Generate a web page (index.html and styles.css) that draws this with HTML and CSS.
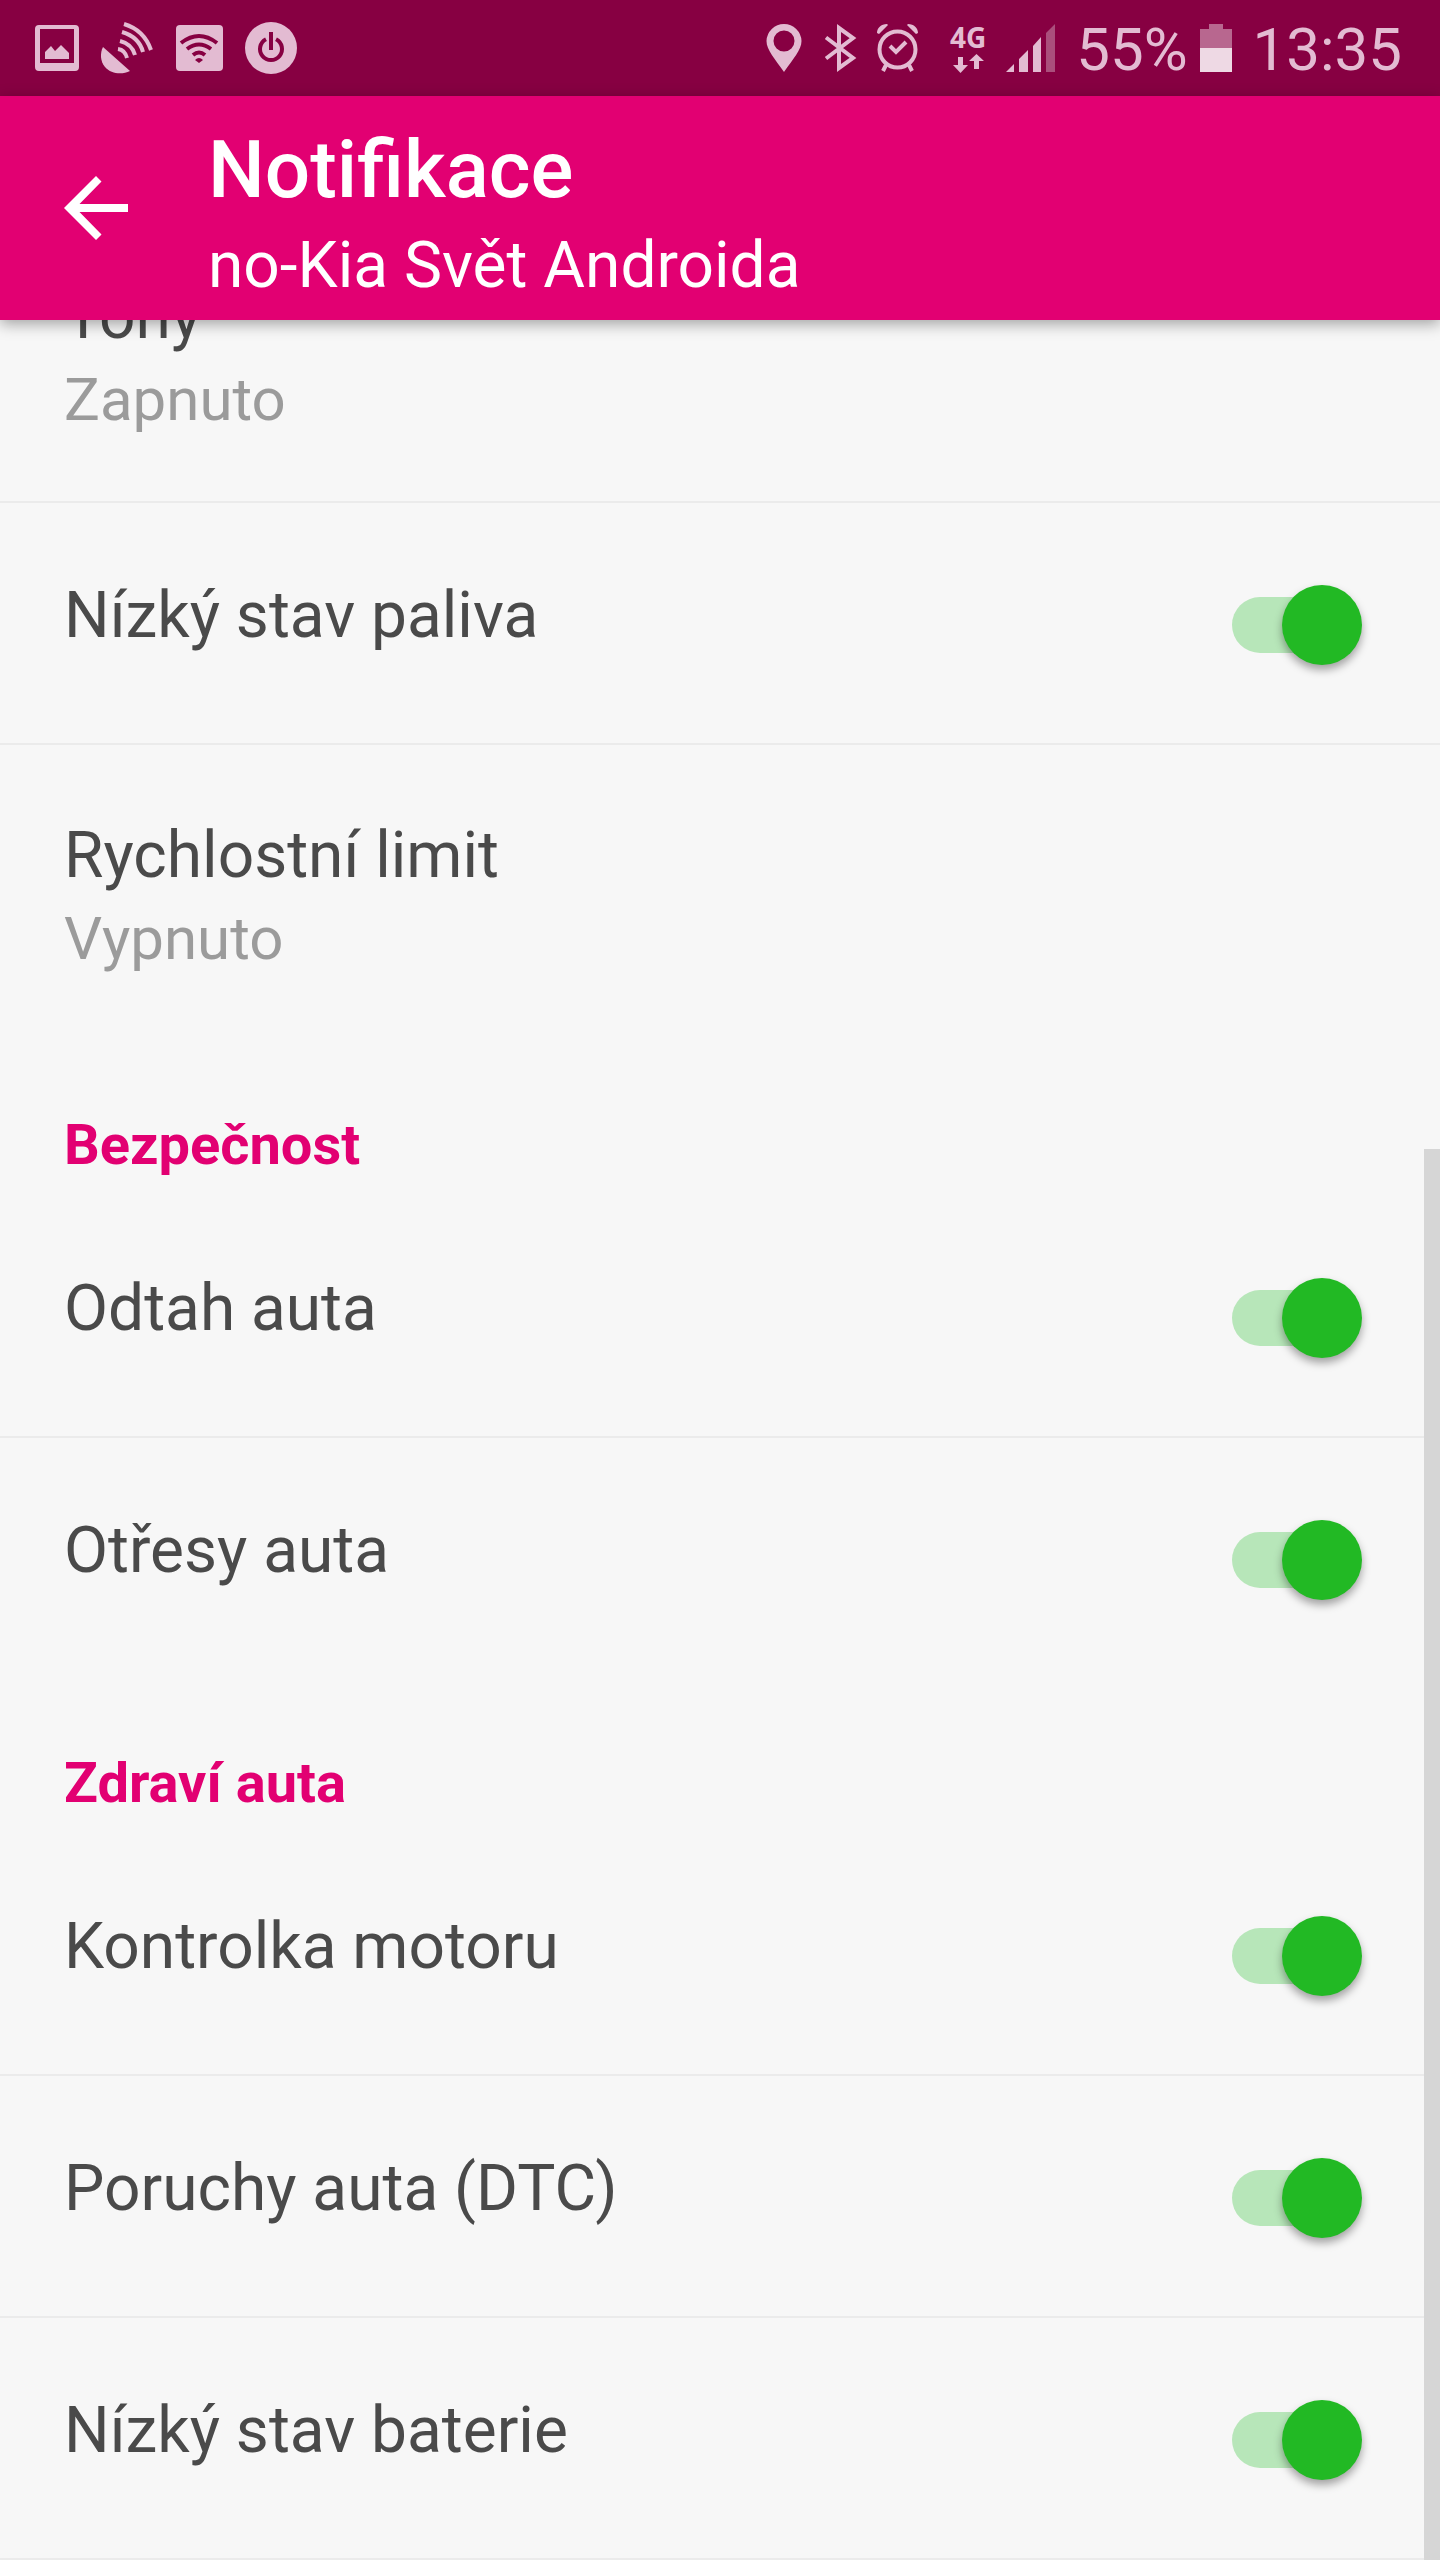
FILE: index.html
```html
<!DOCTYPE html>
<html lang="cs">
<head>
<meta charset="utf-8">
<meta name="viewport" content="width=device-width, initial-scale=1">
<title>Notifikace</title>
<link rel="stylesheet" href="styles.css">
</head>
<body>
<div class="status-bar">
  <div class="status-left">
    <svg class="status-icon" width="44" height="56" viewBox="35 20 44 56" aria-hidden="true">
      <path fill-rule="evenodd" d="M39 25H75Q79 25 79 29V67Q79 71 75 71H39Q35 71 35 67V29Q35 25 39 25ZM40 29V63H74V29Z"/>
      <path d="M45 59V52L51 46L55 51L61 45L69 53V59Z"/>
    </svg>
    <svg class="status-icon" width="52" height="56" viewBox="103 20 52 56" aria-hidden="true">
      <path d="M105 47L132 71C124 75 113 74 107 67C102 61 102 53 105 47Z"/>
      <path class="line" d="M120 49Q127 50 129 58M122 41Q134 44 137 55M124 32Q141 37 145 52M126 24Q146 30 153 50"/>
    </svg>
    <svg class="status-icon" width="48" height="56" viewBox="177 20 48 56" aria-hidden="true">
      <rect x="178" y="25" width="47" height="46" rx="4"/>
      <path class="cut" d="M183 43Q201 29 219 43M189 49Q201 40 213 49M195 55Q201 50 207 55"/>
      <path class="cut-fill" d="M197 60Q201 56 205 60L201 63Z"/>
    </svg>
    <svg class="status-icon" width="52" height="56" viewBox="247 20 52 56" aria-hidden="true">
      <circle cx="273" cy="48" r="26"/>
      <path class="cut" d="M268 39.2A11 11 0 1 0 278 39.2M273 32V50"/>
    </svg>
  </div>
  <div class="status-right">
    <svg class="status-icon" width="44" height="56" viewBox="767 20 44 56" aria-hidden="true">
      <path fill-rule="evenodd" d="M785 24A17.5 17.5 0 0 1 802.5 41C802.5 50 794 59 785 72C776 59 767.5 50 767.5 41A17.5 17.5 0 0 1 785 24ZM785 30.5A10.5 10.5 0 1 0 785 51.5A10.5 10.5 0 1 0 785 30.5Z"/>
    </svg>
    <svg class="status-icon" width="38" height="56" viewBox="823 20 38 56" aria-hidden="true">
      <path class="line" d="M827 37.5L854 58L840 68V28L854 38L827 58.5"/>
    </svg>
    <svg class="status-icon" width="52" height="56" viewBox="873 20 52 56" aria-hidden="true">
      <circle class="line" cx="898.5" cy="49.5" r="18"/>
      <path class="line" d="M891 46L897 52L907 42M887 65L884 71M910 65L913 71"/>
      <path d="M878 33C878 28 882 24 888 24L889 25L880 34ZM919 33C919 28 915 24 909 24L908 25L917 34Z"/>
    </svg>
    <svg class="status-icon" width="56" height="56" viewBox="937 20 56 56" role="img" aria-label="4G">
      <text class="network" x="951" y="48">4G</text>
      <path d="M959 57H964V65H969L961.5 73L954 65H959ZM975 69H980V61H985L977.5 54L970 61H975Z"/>
    </svg>
    <svg class="status-icon" width="60" height="56" viewBox="1005 20 60 56" aria-hidden="true">
      <path d="M1007 72L1015 64V72ZM1020 72V59L1029 50V72ZM1034 72V46L1042 37V72Z"/>
      <path class="faded" d="M1047 72V33L1056 24V72Z"/>
    </svg>
    <span class="status-text">55%</span>
    <svg class="status-icon" width="41" height="56" viewBox="1200 20 41 56" aria-hidden="true">
      <path class="battery-empty" d="M1200 48V29H1209V24H1223V29H1232V48Z"/>
      <path class="battery-full" d="M1200 48H1232V72H1200Z"/>
    </svg>
    <span class="status-text">13:35</span>
  </div>
</div>

<header class="app-bar">
  <button class="back" type="button" aria-label="Zpět">
    <svg width="64" height="64" viewBox="0 0 64 64" aria-hidden="true"><path d="M64 28H15.5L37.5 5.5L32 0L0 32L32 64L37.5 58.5L15.5 36H64Z"/></svg>
  </button>
  <div class="app-titles">
    <h1 class="app-title">Notifikace</h1>
    <p class="app-subtitle">no-Kia Svět Androida</p>
  </div>
</header>

<main class="content">
  <div class="settings">
    <section class="group">
      <div class="row row-detail">
        <div class="name">Tony</div>
        <div class="value">Zapnuto</div>
      </div>
      <div class="row row-toggle">
        <label class="name" for="fuel">Nízký stav paliva</label>
        <input class="switch" type="checkbox" role="switch" id="fuel" checked>
      </div>
      <div class="row row-detail">
        <div class="name">Rychlostní limit</div>
        <div class="value">Vypnuto</div>
      </div>
    </section>
    <section class="group">
      <h2 class="group-title">Bezpečnost</h2>
      <div class="row row-toggle">
        <label class="name" for="tow">Odtah auta</label>
        <input class="switch" type="checkbox" role="switch" id="tow" checked>
      </div>
      <div class="row row-toggle">
        <label class="name" for="shock">Otřesy auta</label>
        <input class="switch" type="checkbox" role="switch" id="shock" checked>
      </div>
    </section>
    <section class="group group-ruled">
      <h2 class="group-title">Zdraví auta</h2>
      <div class="row row-toggle">
        <label class="name" for="engine">Kontrolka motoru</label>
        <input class="switch" type="checkbox" role="switch" id="engine" checked>
      </div>
      <div class="row row-toggle">
        <label class="name" for="dtc">Poruchy auta (DTC)</label>
        <input class="switch" type="checkbox" role="switch" id="dtc" checked>
      </div>
      <div class="row row-toggle">
        <label class="name" for="battery">Nízký stav baterie</label>
        <input class="switch" type="checkbox" role="switch" id="battery" checked>
      </div>
    </section>
  </div>
  <div class="scroll-thumb"></div>
</main>
</body>
</html>
```

FILE: styles.css
```css
:root {
  --brand: #e20072;
  --brand-dark: #870042;
  --status: #e3bbd2;
  --surface: #f7f7f7;
  --divider: #ebebeb;
  --text: #4a4a4a;
  --muted: #9b9b9b;
  --on: #22b924;
  --on-track: #b7e6b9;
}

* {
  box-sizing: border-box;
}

body {
  margin: 0;
  background: var(--surface);
  color: var(--text);
  font-family: Roboto, "Noto Sans", sans-serif;
}

h1,
h2,
p {
  margin: 0;
}

/* Status bar */

.status-bar {
  display: flex;
  justify-content: space-between;
  align-items: center;
  height: 96px;
  padding: 0 38px 0 35px;
  background: var(--brand-dark);
  color: var(--status);
}

.status-left,
.status-right {
  display: flex;
  align-items: center;
}

.status-left {
  gap: 22px;
}

.status-right {
  gap: 12px;
}

.status-icon {
  display: block;
  flex: none;
  overflow: visible;
  fill: var(--status);
}

.status-icon .line {
  fill: none;
  stroke: var(--status);
  stroke-width: 4;
}

.status-icon .cut {
  fill: none;
  stroke: var(--brand-dark);
  stroke-width: 4;
}

.status-icon .cut-fill {
  fill: var(--brand-dark);
}

.status-icon .faded {
  fill: #aa4f7c;
}

.battery-empty {
  fill: #b8678f;
}

.battery-full {
  fill: #eed9e4;
}

.network {
  font: 700 28px "Noto Sans", sans-serif;
}

.status-text {
  padding-top: 4px;
  font-size: 60px;
  line-height: 70px;
}

/* App bar */

.app-bar {
  position: relative;
  z-index: 1;
  display: flex;
  align-items: center;
  gap: 80px;
  padding: 0 64px;
  background: var(--brand);
  color: #fff;
  box-shadow: 0 4px 14px rgba(0, 0, 0, 0.35);
}

.back {
  flex: none;
  padding: 0;
  border: 0;
  background: none;
  cursor: pointer;
}

.back svg {
  display: block;
  fill: #fff;
}

.app-titles {
  display: grid;
  gap: 10px;
  padding: 27px 0 15px;
}

.app-title {
  font-size: 80px;
  font-weight: 500;
  line-height: 94px;
}

.app-subtitle {
  font-size: 64px;
  line-height: 78px;
}

/* Settings list, scrolled partly under the app bar */

.content {
  position: relative;
  overflow: hidden;
}

.settings {
  margin-top: -114px;
}

.group-title {
  padding: 70px 64px 18px;
  color: var(--brand);
  font-size: 56px;
  font-weight: 700;
  line-height: 66px;
}

.row {
  border-bottom: 2px solid var(--divider);
}

.group:not(.group-ruled) .row:last-child {
  border-bottom-color: transparent;
}

.row-detail {
  display: grid;
  gap: 6px;
  padding: 72px 64px 63px;
}

.row-toggle {
  display: flex;
  justify-content: space-between;
  align-items: center;
  min-height: 242px;
  padding: 4px 78px 0 64px;
}

.name {
  font-size: 64px;
  line-height: 78px;
}

.row-toggle .name {
  padding-bottom: 18px;
}

.value {
  color: var(--muted);
  font-size: 60px;
  line-height: 76px;
}

.switch {
  appearance: none;
  display: grid;
  align-items: center;
  flex: none;
  width: 130px;
  height: 80px;
  margin: 0;
  cursor: pointer;
}

.switch::before,
.switch::after {
  content: "";
  grid-area: 1 / 1;
}

.switch::before {
  width: 120px;
  height: 56px;
  border-radius: 28px;
  background: #c4c4c4;
}

.switch::after {
  width: 80px;
  height: 80px;
  border-radius: 50%;
  background: #fafafa;
  box-shadow: 0 5px 8px rgba(0, 0, 0, 0.35);
}

.switch:checked::before {
  background: var(--on-track);
}

.switch:checked::after {
  justify-self: end;
  background: var(--on);
}

.scroll-thumb {
  position: absolute;
  right: 0;
  bottom: 0;
  width: 16px;
  height: 63%;
  background: #d6d6d6;
}
```
